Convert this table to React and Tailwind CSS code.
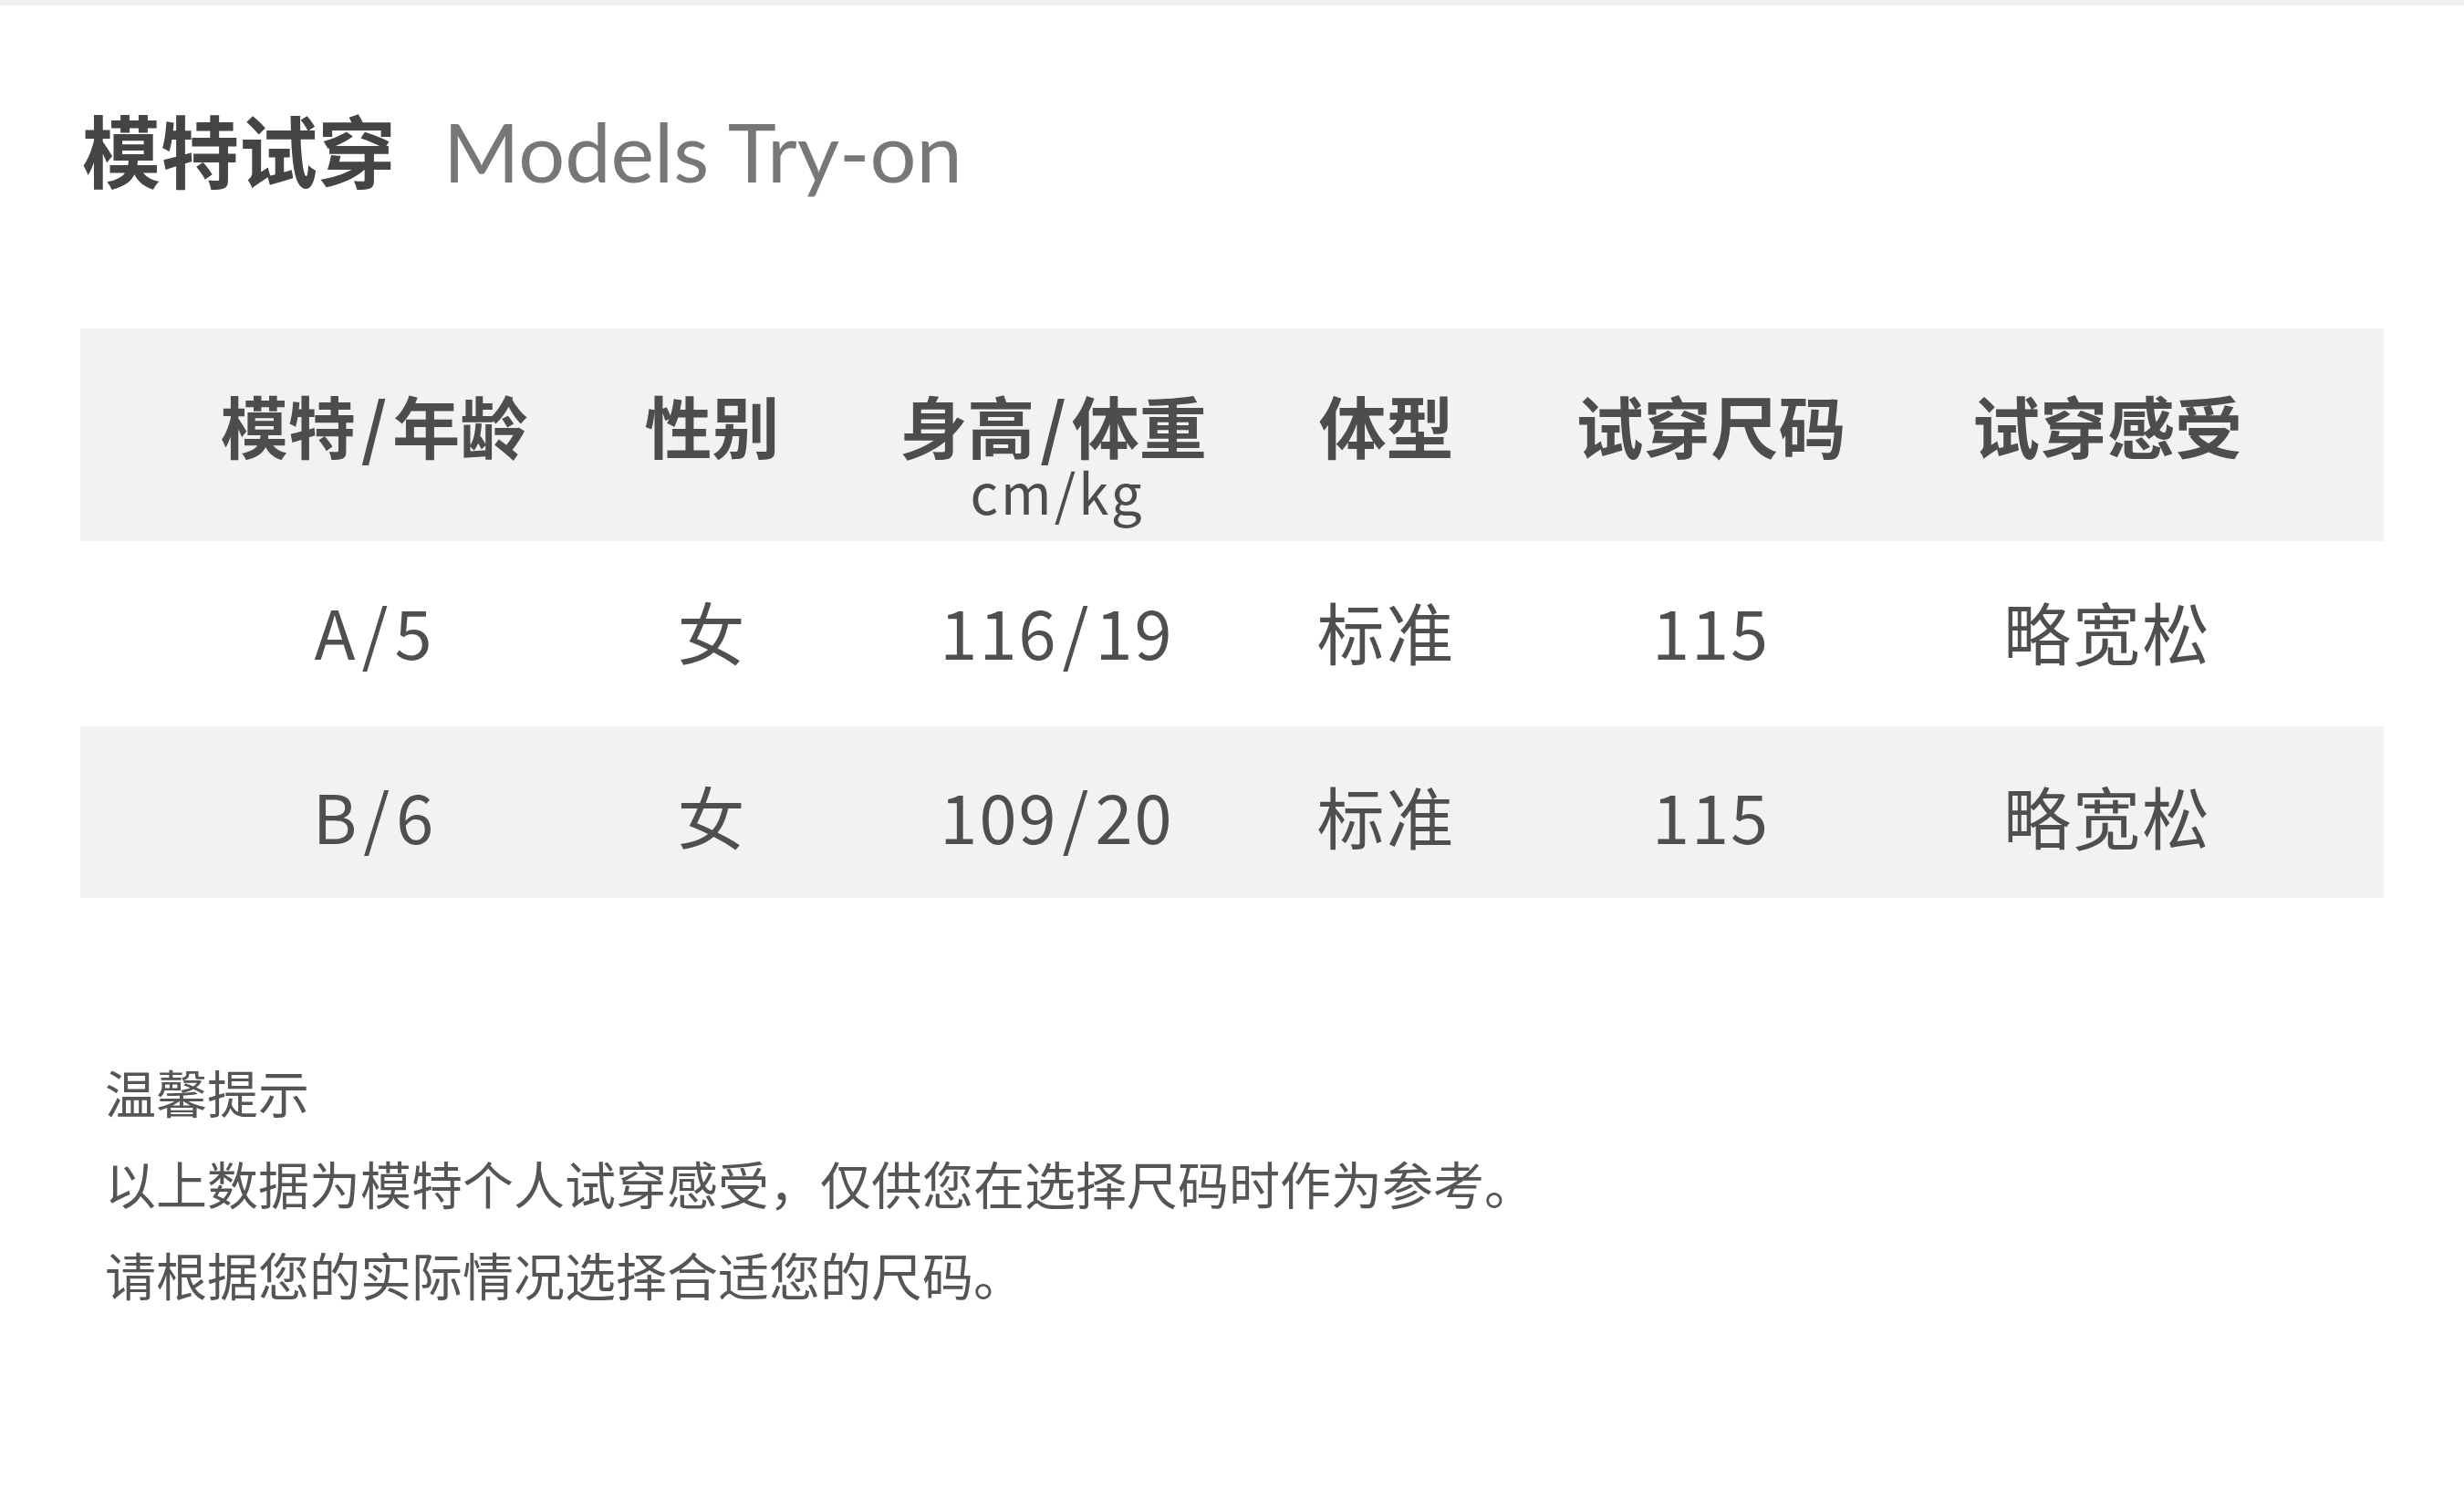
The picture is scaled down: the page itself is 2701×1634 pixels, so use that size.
const columns = [
  { title: ['模特', '年龄'] },
  { title: ['性别'] },
  { title: ['身高', '体重'], unit: 'cm/kg' },
  { title: ['体型'] },
  { title: ['试穿尺码'] },
  { title: ['试穿感受'] },
];

const rows = [
  { cells: [['A', '5'], ['女'], ['116', '19'], ['标准'], ['115'], ['略宽松']], shaded: false, height: 'h-[203px]', pad: 'pt-[61px]' },
  { cells: [['B', '6'], ['女'], ['109', '20'], ['标准'], ['115'], ['略宽松']], shaded: true, height: 'h-[188px]', pad: 'pt-[60px]' },
];

const gridCols = 'grid grid-cols-[370px_371px_385px_337px_375px_494px] pl-[137px]';

// text split at the slash, which sits a little wider than the font gives it
const Split = ({ parts, gap }) => (
  <>
    {parts[0]}
    {parts.length > 1 && <span className={gap}>/</span>}
    {parts[1]}
  </>
);

export default function App() {
  return (
    <div className="bg-white font-['Noto_Sans_CJK_SC',sans-serif] text-[#4d4d4d]">
      <div className="h-[6px] bg-[#f0f0f0]"></div>

      <div className="px-[88px]">
        {/* title */}
        <div className="flex items-baseline mt-[114px] pl-[2px]">
          <h1 className="text-[86px] leading-none font-bold text-[#444444]">模特试穿</h1>
          <span className="ml-[52px] text-[90px] leading-none font-['Lato','Noto_Sans_CJK_SC',sans-serif] text-[#777777]">Models Try-on</span>
        </div>

        {/* table */}
        <div className="mt-[150px]">
          <div className={`${gridCols} h-[233px] items-start pt-[68px] bg-[#f2f2f2]`}>
            {columns.map(col => (
              <div key={col.title.join('')} className={`flex flex-col items-center ${col.unit ? 'pr-[8px]' : ''}`}>
                <span className="text-[74px] leading-none font-bold">
                  <Split parts={col.title} gap="mx-[6px]" />
                </span>
                {col.unit && <span className="mt-[6px] pl-[9px] text-[60px] leading-none tracking-[3px]">{col.unit}</span>}
              </div>
            ))}
          </div>

          {rows.map((row, i) => (
            <div key={i} className={`${gridCols} ${row.height} ${row.pad} items-start ${row.shaded ? 'bg-[#f2f2f2]' : 'bg-white'}`}>
              {row.cells.map((cell, j) => (
                <div key={j} className="text-center text-[74px] leading-none tracking-[2px] text-[#4f4f4f]">
                  <Split parts={cell} gap="mx-[5px]" />
                </div>
              ))}
            </div>
          ))}
        </div>

        {/* notes */}
        <div className="mt-[162px] pl-[27px] text-[56px] leading-[100px] text-[#555555]">
          <p>温馨提示</p>
          <p>以上数据为模特个人试穿感受，仅供您在选择尺码时作为参考。</p>
          <p>请根据您的实际情况选择合适您的尺码。</p>
        </div>
      </div>
    </div>
  );
}
